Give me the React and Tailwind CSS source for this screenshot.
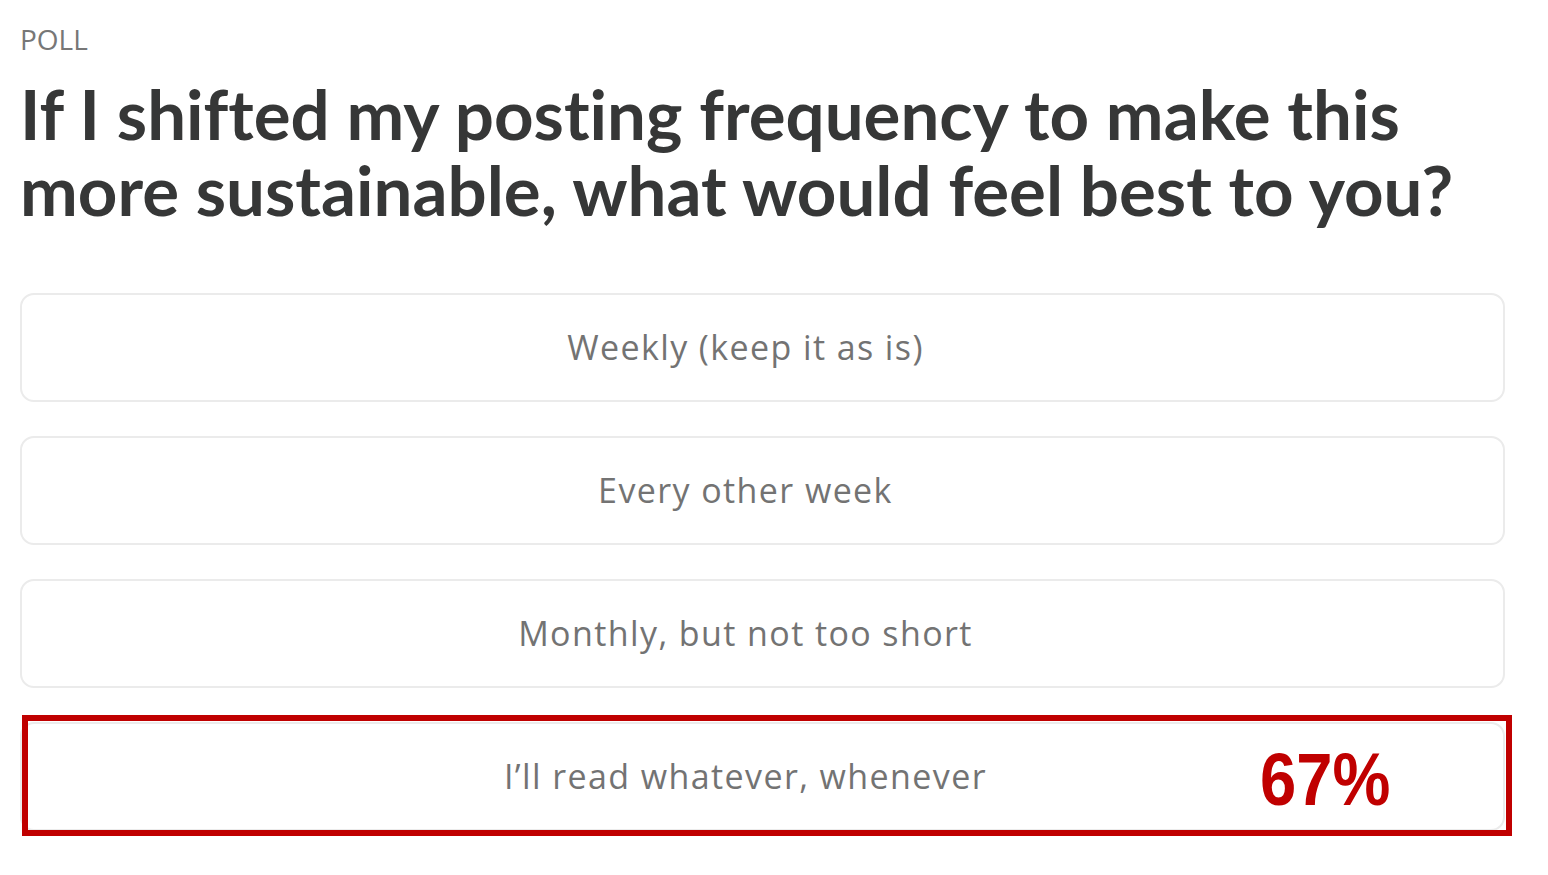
export default function App() {
  const options = [
    "Weekly (keep it as is)",
    "Every other week",
    "Monthly, but not too short",
    "I\u2019ll read whatever, whenever",
  ];

  return (
    <div className="relative min-h-screen bg-white font-['Open_Sans',sans-serif]">
      <div className="w-[1505px] pl-[20px] pt-[20px]">
        <div className="text-[28px] leading-[38px] text-[#777777]">POLL</div>
        <h1 className="mt-[18px] font-['Lato',sans-serif] text-[69px] font-bold leading-[76px] text-[#363737] [font-variant-ligatures:none]">
          If I shifted my posting frequency to make this more sustainable, what would feel best to you?
        </h1>
        <div className="mt-[65px] flex flex-col gap-[34px]">
          {options.map((opt) => (
            <div
              key={opt}
              className="flex h-[109px] items-center justify-center rounded-[14px] border-2 border-[#ebebeb] pr-[34px] text-[34px] tracking-[1.4px] text-[#737373]"
            >
              {opt}
            </div>
          ))}
        </div>
      </div>

      {/* red annotation over the last option */}
      <div className="absolute left-[22px] top-[715px] h-[121px] w-[1490px] border-[6px] border-[#c00000]">
        <span className="absolute left-[1232px] top-[22px] origin-left scale-x-[0.88] font-['Liberation_Sans',sans-serif] text-[74px] font-bold leading-[74px] text-[#c00000]">
          67%
        </span>
      </div>
    </div>
  );
}
